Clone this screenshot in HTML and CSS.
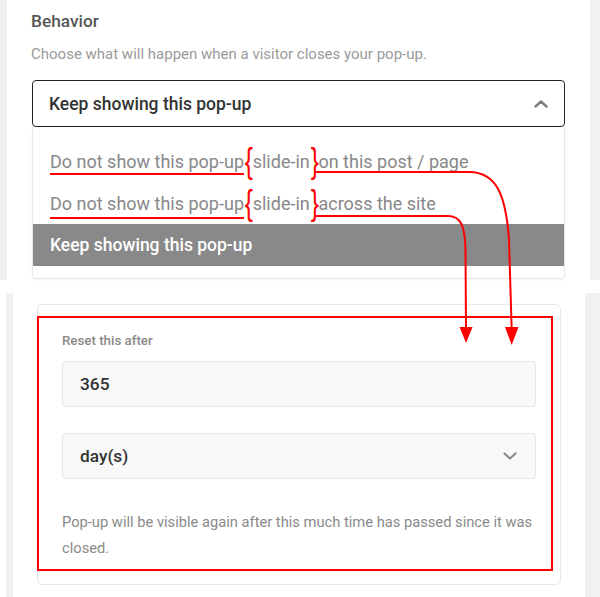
FILE: index.html
```html
<!DOCTYPE html>
<html lang="en">
<head>
<meta charset="utf-8">
<title>Behavior</title>
<link rel="stylesheet" href="styles.css">
</head>
<body>
<div class="top">
  <div class="panel">
    <h2 class="title">Behavior</h2>
    <p class="desc">Choose what will happen when a visitor closes your pop-up.</p>
    <div class="select">
      <span>Keep showing this pop-up</span>
      <svg class="chev" width="14" height="8" viewBox="0 0 14 8"><polyline points="1.5,6.5 7,1.5 12.5,6.5" fill="none" stroke="#7a7f85" stroke-width="2.4" stroke-linecap="round" stroke-linejoin="round"/></svg>
    </div>
    <ul class="list">
      <li class="opt"><span class="ul">Do not show this pop-up</span><span class="brace">{</span><span>slide-in</span><span class="brace">}</span><span>on this post / page</span></li>
      <li class="opt opt2"><span class="ul">Do not show this pop-up</span><span class="brace">{</span><span>slide-in</span><span class="brace">}</span><span>across the site</span></li>
      <li class="opt active">Keep showing this pop-up</li>
    </ul>
  </div>
</div>
<div class="bottom">
  <div class="panel2">
    <div class="card">
      <div class="mark">
        <div class="label">Reset this after</div>
        <div class="field">365</div>
        <div class="field field-select">
          <span>day(s)</span>
          <svg class="chev" width="14" height="8" viewBox="0 0 14 8"><polyline points="1.5,1.5 7,6.5 12.5,1.5" fill="none" stroke="#8a8a8a" stroke-width="2.2" stroke-linecap="round" stroke-linejoin="round"/></svg>
        </div>
        <p class="help">Pop-up will be visible again after this much time has passed since it was closed.</p>
      </div>
    </div>
  </div>
</div>
<svg class="overlay" width="600" height="597" viewBox="0 0 600 597">
  <path d="M314,172 H469 C497,172 506,196 509,240 L511.7,330" fill="none" stroke="#f00" stroke-width="2"/>
  <polygon points="505,327 518.5,327 511.7,345" fill="#f00"/>
  <path d="M314,216 H448 C461,216 465,226 465.5,250 L466,330" fill="none" stroke="#f00" stroke-width="2"/>
  <polygon points="459.5,327 472.5,327 466,343" fill="#f00"/>
</svg>
</body>
</html>
```

FILE: styles.css
```css
html, body {
  margin: 0;
  height: 597px;
  overflow: hidden;
}
body {
  position: relative;
  background: #fff;
  font-family: Roboto, "Noto Sans", "Liberation Sans", sans-serif;
}
.top {
  background: #f1f1f1;
  padding: 0 10px 0 7px;
}
.panel {
  background: #fff;
  height: 280px;
  box-sizing: border-box;
  padding: 10px 25px 0 24px;
}
.title {
  margin: 0;
  font-size: 17.3px;
  line-height: 22px;
  font-weight: 500;
  color: #555;
}
.desc {
  margin: 12px 0 0;
  font-size: 15px;
  line-height: 20px;
  color: #9a9a9a;
}
.select {
  margin: 16px 0 0 1px;
  height: 47px;
  box-sizing: border-box;
  border: 1.5px solid #222;
  border-radius: 4px;
  display: flex;
  align-items: center;
  justify-content: space-between;
  padding: 0 16px 0 16px;
  font-size: 17.5px;
  font-weight: 500;
  color: #333;
}
.list {
  margin: 0 0 0 1px;
  padding: 13px 0 12px;
  list-style: none;
  border: 1px solid #e8e8e8;
  border-top: 0;
  border-radius: 0 0 4px 4px;
  box-shadow: 0 1px 3px rgba(0, 0, 0, 0.05);
}
.opt {
  height: 42px;
  display: flex;
  align-items: center;
  padding-left: 17px;
  font-size: 18px;
  color: #888;
}
.ul {
  text-decoration: underline;
  text-decoration-color: #f00;
  text-decoration-thickness: 2px;
  text-underline-offset: 5px;
}
.opt2 .ul {
  text-underline-offset: 7px;
}
.brace {
  display: inline-block;
  font-family: "Liberation Sans", sans-serif;
  font-size: 35px;
  line-height: 16px;
  color: #f00;
  transform: scaleX(0.7);
  margin: 0 -2px 0 -1px;
}
.active {
  background: #898989;
  color: #fff;
  font-weight: 500;
  font-size: 17.5px;
}
.bottom {
  margin: 13px 0 0 6px;
  height: 304px;
  background: #f1f1f1;
  padding: 0 15px 0 7px;
}
.panel2 {
  background: #fff;
  height: 100%;
  box-sizing: border-box;
  padding: 11px 24px 0 24px;
}
.card {
  border: 1px solid #e8e8e8;
  border-radius: 5px;
  height: 281px;
  box-sizing: border-box;
  padding-top: 11px;
}
.mark {
  border: 2px solid #f00;
  margin: 0 7px 0 -1px;
  height: 255px;
  box-sizing: border-box;
  padding: 14px 15px 0 23px;
}
.label {
  font-size: 13.3px;
  line-height: 18px;
  font-weight: 500;
  color: #8a8a8a;
}
.field {
  margin-top: 11px;
  height: 46px;
  box-sizing: border-box;
  border: 1px solid #e6e6e6;
  border-radius: 4px;
  background: #f8f8f8;
  display: flex;
  align-items: center;
  justify-content: space-between;
  padding: 0 18px 0 17px;
  font-size: 17.3px;
  font-weight: 500;
  color: #333;
}
.field-select {
  margin-top: 26px;
}
.help {
  margin: 30px 0 0;
  font-size: 14.7px;
  line-height: 26px;
  color: #8a8a8a;
}
.overlay {
  position: absolute;
  top: 0;
  left: 0;
  pointer-events: none;
}
```
